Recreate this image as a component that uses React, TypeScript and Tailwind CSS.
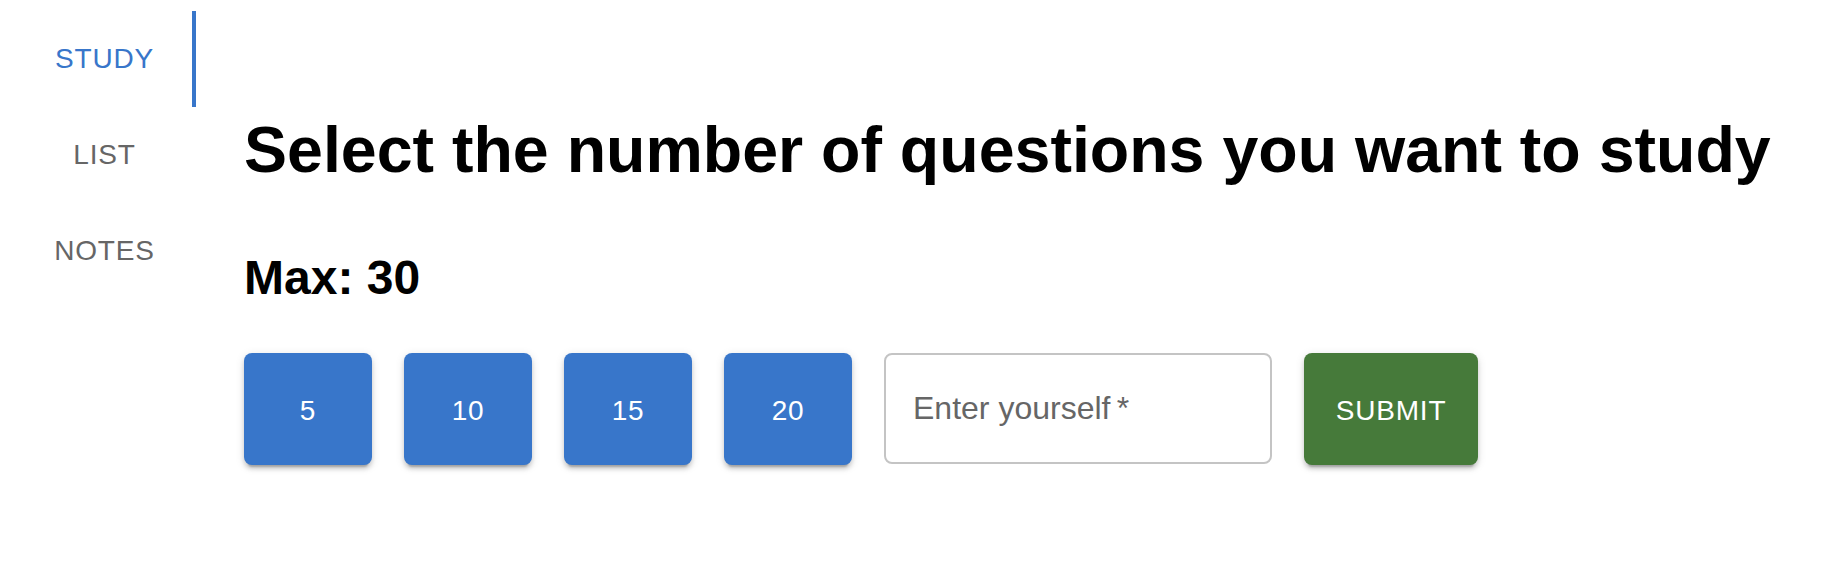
import React, { useState } from 'react';

const tabs = ['STUDY', 'LIST', 'NOTES'];
const counts = [5, 10, 15, 20];

const App = () => {
  const [active, setActive] = useState<number>(0);
  const [value, setValue] = useState<string>('');

  return (
    <div className="flex min-h-[563px] w-full bg-white font-['Liberation_Sans',Arial,sans-serif]">
      {/* side tabs */}
      <div className="flex flex-col pt-[11px] pl-[21px]">
        {tabs.map((tab, i) => (
          <button
            key={tab}
            type="button"
            onClick={() => setActive(i)}
            className={`flex h-[96px] w-[175px] items-center justify-center border-r-4 pr-[4px] text-[28px] leading-[32px] tracking-[0.8px] outline-none ${
              active === i
                ? 'border-[#3876ca] text-[#3876ca]'
                : 'border-transparent text-[#666666]'
            }`}
          >
            {tab}
          </button>
        ))}
      </div>

      {/* main */}
      <div className="flex flex-col pt-[113px] pl-[48px]">
        <h1 className="text-[64.5px] leading-[74px] font-bold text-black">
          Select the number of questions you want to study
        </h1>
        <h3 className="mt-[63px] text-[48px] leading-[56px] font-bold text-black">
          Max: 30
        </h3>
        <div className="mt-[47px] flex flex-row gap-[32px]">
          {counts.map((n) => (
            <button
              key={n}
              type="button"
              onClick={() => setValue(String(n))}
              className="flex h-[112px] w-[128px] items-center justify-center rounded-[8px] bg-[#3876ca] pt-[4px] text-[28px] tracking-[0.8px] text-white shadow-[0px_6px_2px_-4px_rgba(0,0,0,0.2),0px_4px_4px_0px_rgba(0,0,0,0.14),0px_2px_10px_0px_rgba(0,0,0,0.12)]"
            >
              {n}
            </button>
          ))}
          <div className="relative flex h-[111px] w-[388px] items-center rounded-[8px] border-2 border-[#c4c4c4] bg-white px-[27px]">
            <input
              value={value}
              onChange={(e) => setValue(e.target.value)}
              className="absolute inset-0 h-full w-full bg-transparent px-[27px] text-[32px] text-black outline-none"
            />
            {value === '' && (
              <span className="pointer-events-none text-[32px] leading-[37px] text-[#666666]">
                Enter yourself&thinsp;*
              </span>
            )}
          </div>
          <button
            type="button"
            className="flex h-[112px] w-[174px] items-center justify-center rounded-[8px] bg-[#467a3a] pt-[4px] text-[28px] tracking-[0.8px] text-white shadow-[0px_6px_2px_-4px_rgba(0,0,0,0.2),0px_4px_4px_0px_rgba(0,0,0,0.14),0px_2px_10px_0px_rgba(0,0,0,0.12)]"
          >
            SUBMIT
          </button>
        </div>
      </div>
    </div>
  );
};

export default App;
